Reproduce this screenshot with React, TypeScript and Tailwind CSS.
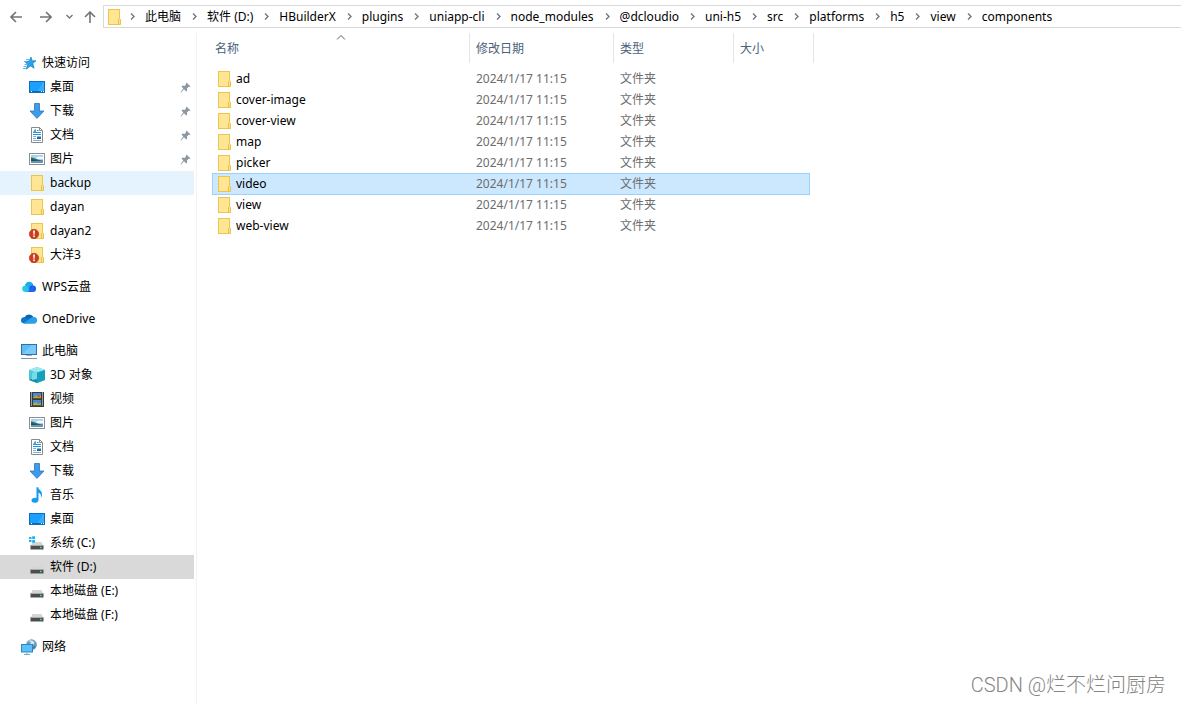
import React, { useState } from 'react';

type IconProps = { className?: string };

const Svg = ({ children }: { children: React.ReactNode }) => (
  <svg viewBox="0 0 16 16" className="h-4 w-4 shrink-0" aria-hidden="true">
    {children}
  </svg>
);

const FolderShape = () => (
  <>
    <rect x="2.5" y="0.5" width="11" height="15" fill="#ffe594" stroke="#eac64b" />
    <path d="M12.500 15.500V10.500l1-1 1 1v5z" fill="#ffe183" stroke="#e5bd3d" strokeWidth=".9" />
  </>
);

const FolderIcon = () => (
  <Svg>
    <FolderShape />
  </Svg>
);

const FolderAlertIcon = () => (
  <Svg>
    <FolderShape />
    <circle cx="5" cy="11" r="4.700" fill="#cf3a20" stroke="#a92d18" strokeWidth=".6" />
    <path d="M4.100 7.500h1.800l-.3 4.200H4.400z" fill="#fff" />
    <rect x="4.200" y="12.500" width="1.600" height="1.600" fill="#fff" />
  </Svg>
);

const StarIcon = () => (
  <Svg>
    <path
      d="M10 2l1.200 3.800h3.800l-3.200 2.800 1.300 4.600-3.700-2.300-4 3.200 1.200-4.800-3-2.700 4.400-.4z"
      fill="#2ba3ea"
      stroke="#1b80c4"
      strokeWidth=".7"
    />
    <path d="M5 4.500h3M3 6.500h3M3.500 9.500h3M2.500 11.500h3M2 13.500h3" stroke="#55b5ee" strokeWidth=".9" />
  </Svg>
);

const DesktopIcon = () => (
  <Svg>
    <rect x="0.5" y="2.500" width="15" height="11" fill="#1a9fff" stroke="#0b72b8" />
    <path d="M8 13L14 3h1v10z" fill="#38adff" />
    <path d="M1 12.500h14" stroke="#0b67ad" />
    <path d="M2 12.500h1M12 12.500h1M14 12.500h1" stroke="#fff" />
  </Svg>
);

const DownloadIcon = () => (
  <Svg>
    <path d="M5.500 0.500h5v7.500h4.500L8 15.400 1 8h4.500z" fill="#3c9bea" stroke="#2a77bd" strokeWidth=".8" />
  </Svg>
);

const DocumentIcon = () => (
  <Svg>
    <path d="M2.500 0.500h8l3 3v12h-11z" fill="#fff" stroke="#8a8a8a" />
    <path d="M10.500 0.500v3h3" fill="none" stroke="#8a8a8a" />
    <path d="M4.300 6L6.300 2.500V6M8 3.500h1.500M4.500 5.500H12M4 7.500h8" fill="none" stroke="#2492d8" />
    <path d="M4 9.500h3M4 11.500h3M4 13.500h8" stroke="#7fb2d6" />
    <rect x="8" y="9" width="4" height="3" fill="#2e6688" />
    <path d="M8 9.500h4" stroke="#79c2ef" />
  </Svg>
);

const PictureIcon = () => (
  <Svg>
    <rect x="0.5" y="2.500" width="15" height="11" fill="#fff" stroke="#8e8e8e" />
    <rect x="2" y="4" width="12" height="8" fill="#a5d2f3" />
    <path d="M7 6.500l3-1 4 .5v2H8z" fill="#f1f9ff" />
    <path d="M2 6.500c3 0 5 2.500 12 3V10H2z" fill="#39655a" />
    <path d="M2 10h12v2H2z" fill="#5f97bd" />
    <path d="M2 8.500l7 1.500H2z" fill="#2a4c40" />
  </Svg>
);

const WpsCloudIcon = () => (
  <Svg>
    <circle cx="4.500" cy="9.700" r="3.300" fill="#27d3d6" />
    <circle cx="8.200" cy="6.900" r="4.200" fill="#20a7f5" />
    <circle cx="11.700" cy="9.700" r="3.300" fill="#1557e8" />
    <path d="M4.500 13c3 0 4.500-3.500 7-6.600 3 3 2 6.600.2 6.600z" fill="#1a68ee" />
    <path d="M4 6.600c2.500-.6 4.500 2.400 2 6.400H4.500z" fill="#25c6e2" />
  </Svg>
);

const OneDriveIcon = () => (
  <Svg>
    <path d="M3.500 6.500a5 5 0 0 1 9-.5l-3 3-6 2z" fill="#0a64b8" />
    <path d="M0 9.500a3.300 3.300 0 0 1 5-3l5 3-4 2.700H3A2.900 2.900 0 0 1 0 9.500z" fill="#1374c8" />
    <path d="M2 12.800l7-5.300A4 4 0 0 1 13 6a3.200 3.200 0 0 1 3 3.400 3.300 3.300 0 0 1-3 3.400z" fill="#28a1e8" />
  </Svg>
);

const ComputerIcon = () => (
  <Svg>
    <rect x="0.5" y="1.500" width="15" height="10" fill="#5cbcfa" stroke="#3b6f93" />
    <path d="M1 11L11 2h4v9z" fill="#86d0ff" opacity=".7" />
    <path d="M5 12.500h6" stroke="#9bb2c2" />
    <path d="M0 15.500h16" stroke="#7b93a5" />
  </Svg>
);

const CubeIcon = () => (
  <Svg>
    <path d="M0 3l8-3 8 3v10l-8 3-8-3z" fill="#4bc6d8" />
    <path d="M0 3l8-3 8 3-8 2.500z" fill="#9ce8ef" />
    <path d="M8 5.500L16 3v10l-8 3z" fill="#17a0bd" />
    <path d="M0 13l8-3v6z" fill="#1b8ba5" />
    <path d="M3 6l5-2v8l-5 1z" fill="#73dce5" />
  </Svg>
);

const VideoIcon = () => (
  <Svg>
    <rect x="1" y="1" width="14" height="15" fill="#3b3b3b" />
    <path d="M2.500 1.500v14M13.500 1.500v14" stroke="#fff" strokeDasharray="1 1" />
    <rect x="4" y="2" width="8" height="6" fill="#4389e0" />
    <rect x="4" y="9" width="8" height="6" fill="#4389e0" />
    <path d="M4 7l3-3 2 2 3-2v4H4z" fill="#cf9b28" />
    <path d="M4 13l3-2 2 2 3-1v3H4z" fill="#c6a53b" />
    <path d="M4 7.500h8M4 14.500h8" stroke="#39682f" />
    <rect x="9" y="4" width="2" height="2" fill="#e34c37" />
  </Svg>
);

const MusicIcon = () => (
  <Svg>
    <path
      d="M7.500 0.300h1.700c.2 2.600 4.300 3.300 3.800 7.700-.2 1.500-.7 2.200-1.300 2.900.7-2.600.2-4.500-2.200-5.200v7.200c0 1.700-1.600 2.900-3.800 2.900-2 0-3.200-1-3.200-2.300 0-1.900 2.200-3.100 5-2.500z"
      fill="#159cf0"
    />
  </Svg>
);

const Drive = () => (
  <>
    <path d="M3.500 7h9l2 4h-13z" fill="#d3d5d6" />
    <path d="M1.500 10.500h13v4h-13z" fill="#4b4e50" />
    <path d="M1.500 10.500h13" stroke="#a9acae" />
    <path d="M11 12.500h1.500" stroke="#45f06b" strokeWidth="1.300" />
  </>
);

const DriveIcon = () => (
  <Svg>
    <Drive />
  </Svg>
);

const SystemDriveIcon = () => (
  <Svg>
    <Drive />
    <path d="M0 2h2.500v2H0zM3.200 1.300H6V4H3.200zM0 5h2.500v2H0zM3.200 5H6v2.700H3.200z" fill="#13b5f4" />
  </Svg>
);

const NetworkIcon = () => (
  <Svg>
    <circle cx="10.500" cy="5.700" r="5.400" fill="#6f9fbf" />
    <path d="M7 2l3 1-1 2.500 3 .5 1.500-2.500C12 1.500 9 .5 7 2z" fill="#d4e7f1" />
    <path d="M11 8l4-1.500-2 3.500z" fill="#3c789d" />
    <rect x="0.5" y="5.500" width="11" height="7.500" fill="#5cc0fa" stroke="#3384b9" />
    <path d="M6 13.500v1.500M3 15.500h6" stroke="#6faccd" />
  </Svg>
);

const PinIcon = () => (
  <svg viewBox="0 0 11 11" className="mr-[3px] h-[11px] w-[11px] shrink-0" aria-hidden="true">
    <path d="M6.500 0.500l4 4-1 .6-.7-.3L7 6.600l.2 2-1 1L4 7.300 1 10.500l-.5-.2 2.800-3.700L1.500 4.500l1-.9 2 .3 1.800-1.800-.4-.8z" fill="#8c99a5" />
  </svg>
);

const ArrowIcon = ({ className = '' }: IconProps) => (
  <svg viewBox="0 0 12 12" className={`h-3 w-3 ${className}`} aria-hidden="true">
    <path d="M6 1L1 6l5 5M1 6h11" fill="none" stroke="#747474" strokeWidth="1.600" />
  </svg>
);

const ChevronIcon = ({ className = '' }: IconProps) => (
  <svg viewBox="0 0 5 7" className={`h-[7px] w-[5px] shrink-0 ${className}`} aria-hidden="true">
    <path d="M1 0.500l3 3-3 3" fill="none" stroke="#777" strokeWidth="1.400" />
  </svg>
);

type Item = { label: string; icon: () => React.ReactElement; pinned?: boolean; state?: 'hover' | 'current' };
type Group = { root: Item; children: Item[] };

const groups: Group[] = [
  {
    root: { label: '快速访问', icon: StarIcon },
    children: [
      { label: '桌面', icon: DesktopIcon, pinned: true },
      { label: '下载', icon: DownloadIcon, pinned: true },
      { label: '文档', icon: DocumentIcon, pinned: true },
      { label: '图片', icon: PictureIcon, pinned: true },
      { label: 'backup', icon: FolderIcon, state: 'hover' },
      { label: 'dayan', icon: FolderIcon },
      { label: 'dayan2', icon: FolderAlertIcon },
      { label: '大洋3', icon: FolderAlertIcon },
    ],
  },
  { root: { label: 'WPS云盘', icon: WpsCloudIcon }, children: [] },
  { root: { label: 'OneDrive', icon: OneDriveIcon }, children: [] },
  {
    root: { label: '此电脑', icon: ComputerIcon },
    children: [
      { label: '3D 对象', icon: CubeIcon },
      { label: '视频', icon: VideoIcon },
      { label: '图片', icon: PictureIcon },
      { label: '文档', icon: DocumentIcon },
      { label: '下载', icon: DownloadIcon },
      { label: '音乐', icon: MusicIcon },
      { label: '桌面', icon: DesktopIcon },
      { label: '系统 (C:)', icon: SystemDriveIcon },
      { label: '软件 (D:)', icon: DriveIcon, state: 'current' },
      { label: '本地磁盘 (E:)', icon: DriveIcon },
      { label: '本地磁盘 (F:)', icon: DriveIcon },
    ],
  },
  { root: { label: '网络', icon: NetworkIcon }, children: [] },
];

const crumbs = [
  '此电脑', '软件 (D:)', 'HBuilderX', 'plugins', 'uniapp-cli', 'node_modules', '@dcloudio',
  'uni-h5', 'src', 'platforms', 'h5', 'view', 'components',
];

const folders = ['ad', 'cover-image', 'cover-view', 'map', 'picker', 'video', 'view', 'web-view'];

function TreeRow({ item, nested = false }: { item: Item; nested?: boolean }) {
  const Icon = item.icon;
  const background =
    item.state === 'hover' ? 'bg-[#e5f3ff]' : item.state === 'current' ? 'bg-[#d9d9d9]' : 'hover:bg-[#e5f3ff]';
  return (
    <a
      href="#"
      aria-current={item.state === 'current' ? 'true' : undefined}
      className={`flex h-6 items-center gap-[5px] whitespace-nowrap ${nested ? 'pl-[29px]' : 'pl-[21px]'} ${background}`}
    >
      <Icon />
      <span className="flex-1">{item.label}</span>
      {item.pinned && <PinIcon />}
    </a>
  );
}

function AddressBar() {
  return (
    <header className="flex h-[33px] items-start pt-[5px]">
      <div className="flex h-[23px] w-[103px] shrink-0 items-center pl-[10px]">
        <button type="button" aria-label="后退"><ArrowIcon /></button>
        <button type="button" aria-label="前进" className="ml-[18px]"><ArrowIcon className="rotate-180" /></button>
        <button type="button" aria-label="最近浏览的位置" className="ml-[15px]"><ChevronIcon className="rotate-90" /></button>
        <button type="button" aria-label="上移" className="ml-[12px]"><ArrowIcon className="rotate-90" /></button>
      </div>
      <nav aria-label="路径" className="flex h-[23px] min-w-0 flex-1 items-center overflow-hidden border-y border-l border-[#d9d9d9] pl-[2px]">
        <FolderIcon />
        <ol className="-ml-[3px] flex items-center">
          {crumbs.map((crumb) => (
            <li key={crumb} className="flex items-center whitespace-nowrap">
              <ChevronIcon className="mr-[10px] ml-[11px]" />
              <a href="#">{crumb}</a>
            </li>
          ))}
        </ol>
      </nav>
    </header>
  );
}

function FileTable() {
  const [selected, setSelected] = useState('video');
  const head = 'border-r border-[#e5e5e5] pt-[3px] pb-px text-left font-normal';
  return (
    <table className="w-[602px] table-fixed border-separate border-spacing-0">
      <colgroup>
        <col className="w-[258px]" />
        <col className="w-[144px]" />
        <col className="w-[120px]" />
        <col className="w-[76px]" />
        <col className="w-[4px]" />
      </colgroup>
      <thead className="text-[#4c607a]">
        <tr className="h-[30px]">
          <th className={`relative pl-[3px] ${head}`} aria-sort="ascending">
            名称
            <svg viewBox="0 0 9 5" className="absolute top-[2px] left-1/2 h-[5px] w-[9px] -translate-x-1/2" aria-hidden="true">
              <path d="M.5 4.500l4-4 4 4" fill="none" stroke="#5a5a5a" />
            </svg>
          </th>
          <th className={`pl-[6px] ${head}`}>修改日期</th>
          <th className={`pl-[6px] ${head}`}>类型</th>
          <th colSpan={2} className={`pl-[6px] ${head}`}>大小</th>
        </tr>
      </thead>
      <tbody className="text-[#6d6d6d]">
        <tr className="h-[5px]"><td colSpan={5} /></tr>
        {folders.map((name) => {
          const cell =
            name === selected
              ? 'bg-[#cce8ff] border-t border-t-[#99d1ff] shadow-[0_1px_0_#99d1ff]'
              : 'border-t border-t-transparent';
          const edge = name === selected ? 'border-x-[#99d1ff]' : 'border-x-transparent';
          return (
            <tr key={name} className="h-[21px] leading-4" onClick={() => setSelected(name)}>
              <td className={`border-l p-0 pb-px ${cell} ${edge}`}>
                <div className="flex items-center gap-[4px] pl-[3px] text-black">
                  <FolderIcon />
                  {name}
                </div>
              </td>
              <td className={`p-0 pb-px pl-[6px] ${cell}`}>2024/1/17 11:15</td>
              <td className={`p-0 pb-px pl-[6px] ${cell}`}>文件夹</td>
              <td className={`border-r p-0 ${cell} ${edge}`} />
              <td className="p-0" />
            </tr>
          );
        })}
      </tbody>
    </table>
  );
}

export default function App() {
  return (
    <div className="relative flex min-h-screen flex-col bg-white font-['Noto_Sans','Noto_Sans_CJK_SC',sans-serif] text-[12px] leading-4 text-black">
      <AddressBar />
      <div className="flex flex-1">
        <aside className="w-[197px] shrink-0 border-r border-[#f2f2f2] pt-[18px] pr-[2px]">
          <nav aria-label="导航窗格" className="flex flex-col gap-2">
            {groups.map((group) => (
              <div key={group.root.label}>
                <TreeRow item={group.root} />
                {group.children.map((item) => (
                  <TreeRow key={item.label} item={item} nested />
                ))}
              </div>
            ))}
          </nav>
        </aside>
        <main className="min-w-0 flex-1 pl-[15px]">
          <FileTable />
        </main>
      </div>
      <p className="absolute right-[15px] bottom-[7px] font-['Roboto','Noto_Sans_CJK_SC',sans-serif] text-[20px] leading-6 font-light text-[#858585]">
        CSDN @烂不烂问厨房
      </p>
    </div>
  );
}
